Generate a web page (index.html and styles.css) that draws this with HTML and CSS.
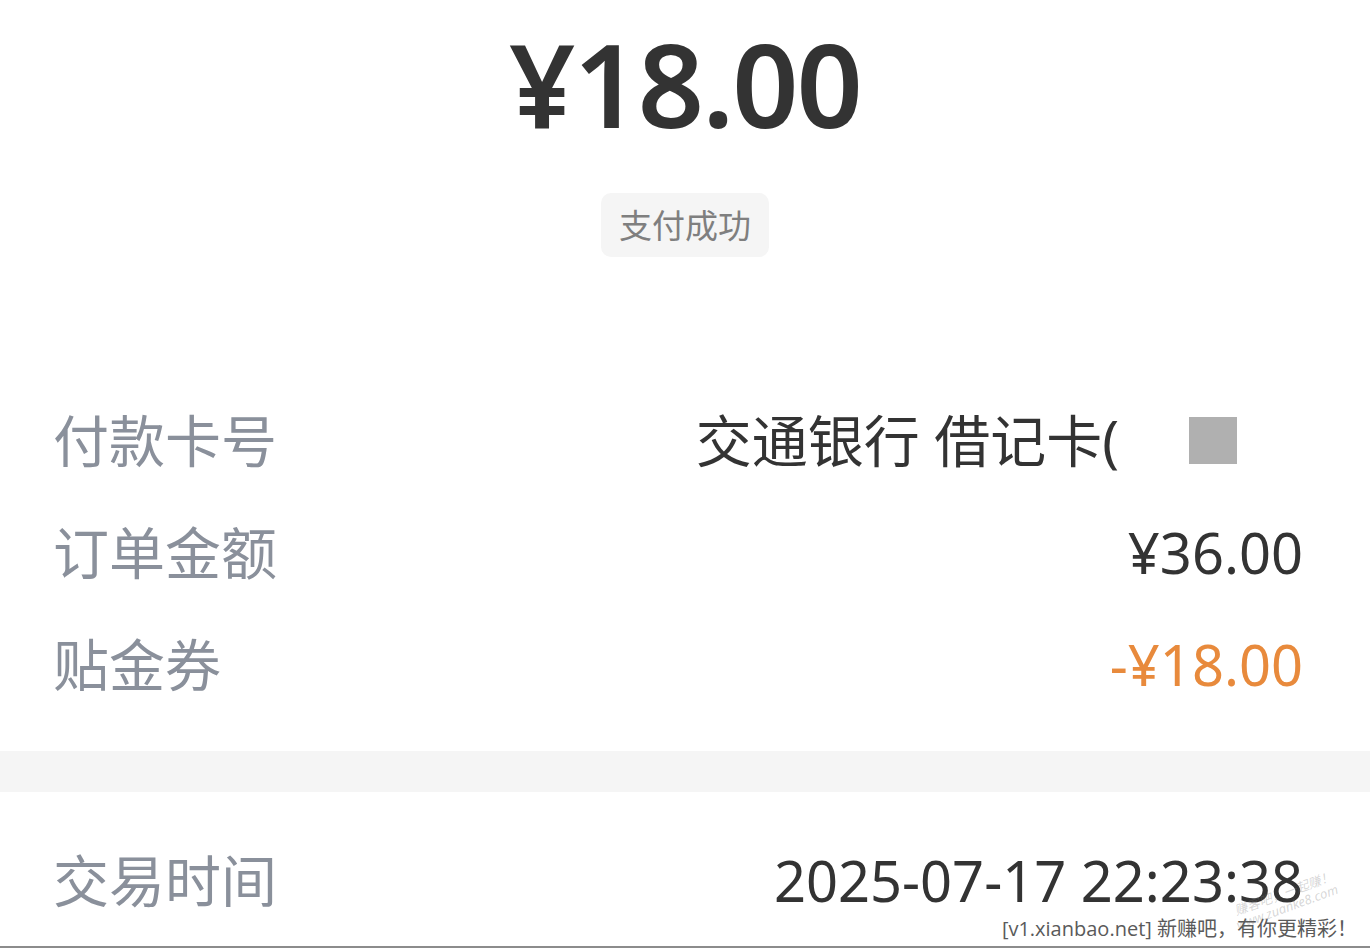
FILE: index.html
```html
<!DOCTYPE html>
<html lang="zh-CN">
<head>
  <title>支付详情</title>
  <meta charset="utf-8">
  <meta name="viewport" content="width=device-width, initial-scale=1">
  <link rel="stylesheet" href="styles.css">
</head>

<body>
  <div class="page">
    <header class="pay-head">
      <div class="pay-head__amount">¥18.00</div>
      <span class="pay-head__status">支付成功</span>
    </header>

    <section class="detail">
      <div class="detail__row">
        <span class="detail__label">付款卡号</span>
        <span class="detail__value detail__value_card">
          交通银行 借记卡(
          <i class="detail__mask"></i>
        </span>
      </div>
      <div class="detail__row">
        <span class="detail__label">订单金额</span>
        <span class="detail__value">¥36.00</span>
      </div>
      <div class="detail__row">
        <span class="detail__label">贴金券</span>
        <span class="detail__value detail__value_discount">-¥18.00</span>
      </div>
    </section>

    <div class="divider"></div>

    <section class="detail">
      <div class="detail__row">
        <span class="detail__label">交易时间</span>
        <span class="detail__value">2025-07-17 22:23:38</span>
      </div>
    </section>

    <div class="stamp">
      <span>赚客吧，一起赚！</span>
      <span>www.zuanke8.com</span>
    </div>

    <footer class="source">[v1.xianbao.net] 新赚吧，有你更精彩！</footer>
  </div>
</body>
</html>
```

FILE: styles.css
```css
*,
*::before,
*::after {
  box-sizing: border-box;
  margin: 0;
  padding: 0;
}

body {
  color: #333333;
  font-family: "Noto Sans", "Noto Sans CJK SC", sans-serif;
  background-color: #FFFFFF;
}

.page {
  position: relative;
  height: 948px;
  overflow: hidden;
}

.pay-head {
  display: flex;
  flex-direction: column;
  align-items: center;
  padding-top: 25px;
}

.pay-head__amount {
  font-size: 116px;
  font-weight: 600;
  line-height: 1;
  letter-spacing: -2px;
  color: #333333;
}

.pay-head__status {
  display: flex;
  align-items: center;
  justify-content: center;
  width: 168px;
  height: 64px;
  margin-top: 52px;
  border-radius: 10px;
  font-size: 33px;
  line-height: 1;
  color: #7f7f7f;
  background-color: #f5f5f5;
}

.detail {
  padding: 0 67px 0 53px;
}

.pay-head + .detail {
  margin-top: 127px;
}

.detail__row {
  display: flex;
  justify-content: space-between;
  align-items: center;
  height: 112px;
}

.detail__label {
  font-size: 56px;
  line-height: 1;
  color: #8a909b;
}

.detail__value {
  font-size: 56px;
  line-height: 1;
  color: #333333;
}

.detail__value_card {
  display: flex;
  align-items: center;
  gap: 70px;
}

.detail__value_discount {
  color: #e88a3c;
}

.detail__mask {
  display: block;
  width: 48px;
  height: 47px;
  margin-right: 66px;
  background-color: #b0b0b0;
}

.divider {
  height: 41px;
  margin: 31px 0 32px;
  background-color: #f5f5f5;
}

.stamp {
  position: absolute;
  right: 30px;
  bottom: 52px;
  display: flex;
  flex-direction: column;
  align-items: flex-end;
  transform: rotate(-20deg);
  transform-origin: right bottom;
  font-size: 13px;
  font-style: italic;
  line-height: 1.1;
  color: rgba(120, 120, 120, 0.3);
}

.source {
  position: absolute;
  left: 0;
  right: 0;
  bottom: 0;
  padding: 0 13px 5px 0;
  border-bottom: 2px solid #8c8c8c;
  font-family: "Open Sans", "Noto Sans CJK SC", sans-serif;
  font-size: 20px;
  line-height: 1.2;
  text-align: right;
  color: #5a5a5a;
}
```
